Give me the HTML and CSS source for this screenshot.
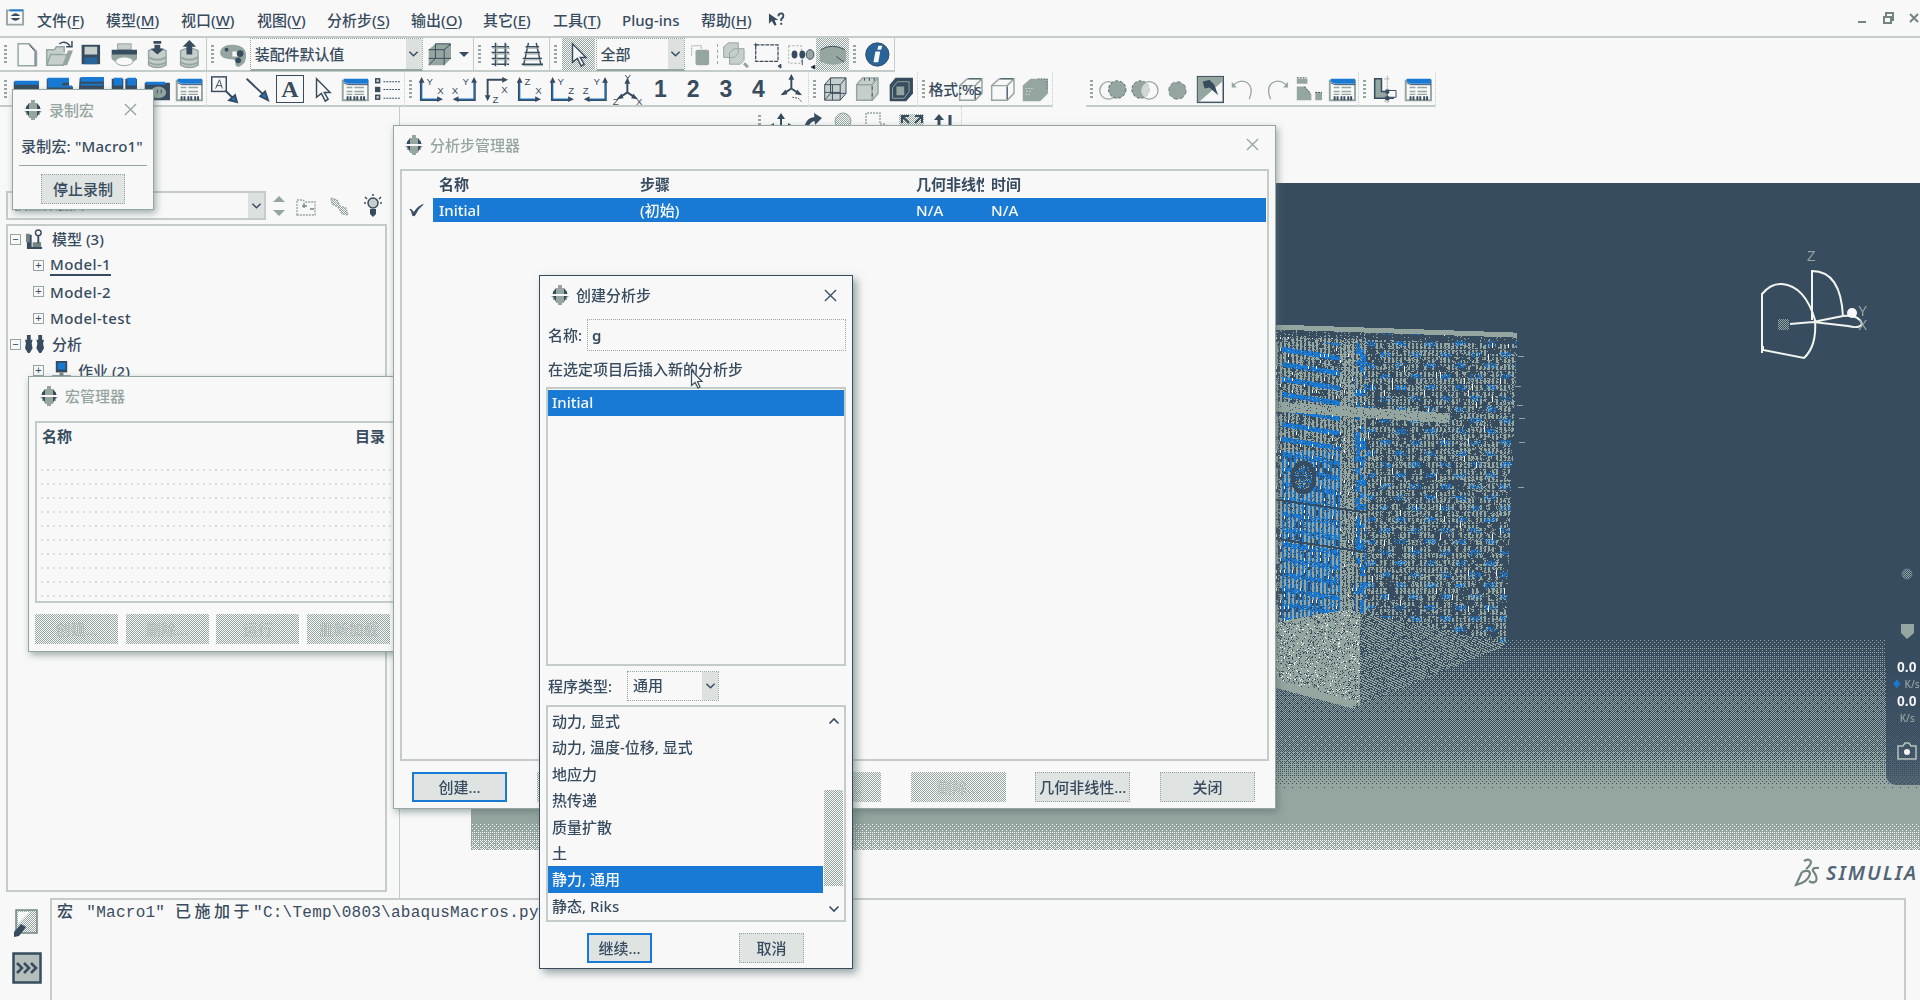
FILE: index.html
```
<!DOCTYPE html>
<html lang="zh-CN">
<head>
<meta charset="utf-8">
<title>Abaqus/CAE</title>
<link rel="stylesheet" href="styles.css">
</head>
<body>
<svg class="defs" width="0" height="0">
  <defs>
    <pattern id="dot" width="2" height="2" patternUnits="userSpaceOnUse"><rect width="1" height="1" fill="#95a5a0"/><rect x="1" y="1" width="1" height="1" fill="#95a5a0"/></pattern>
    <pattern id="mix" width="2" height="2" patternUnits="userSpaceOnUse"><rect width="2" height="2" fill="#384c60"/><rect width="1" height="1" fill="#187ad4"/><rect x="1" y="1" width="1" height="1" fill="#187ad4"/></pattern>
  </defs>
  <symbol id="logo" viewBox="0 0 18 20"><path d="M5 3h2V0h4v3h2v3h3v2l2 1H0l2-1V6h3zM0 11h18l-2 2v2h-3v3h-2v2H7v-2H5v-3H2v-2z" fill="#95a5a0"/><path d="M2 9V7l3-4v6zM16 9V7l-3-4v6zM2 11l3 6v-6zM16 11l-3 6v-6z" fill="#384c60"/></symbol>
  <symbol id="new" viewBox="0 0 32 34"><path d="M7.500 6v22.500h19V14L19 6z" fill="none" stroke="#95a5a0" stroke-width="1.500"/><path d="M19 7l6 7v14" fill="none" stroke="#384c60"/></symbol>
  <symbol id="open" viewBox="0 0 32 34"><path d="M3 28V12h8l2-3h8v6M3 28l4-11h19l-6 11z" fill="url(#dot)" stroke="#95a5a0" stroke-width="1.500"/><path d="M25 13h5l-6 15h-5z" fill="#95a5a0"/><path d="M16 6q6-4 11 2M29 3v6h-6" fill="none" stroke="#384c60" stroke-width="1.500"/></symbol>
  <symbol id="save" viewBox="0 0 32 34"><rect x="6" y="7" width="19" height="20" fill="#384c60"/><rect x="9" y="9" width="13" height="8" fill="#c7cfcc"/><rect x="9" y="20" width="13" height="7" fill="url(#mix)"/></symbol>
  <symbol id="print" viewBox="0 0 32 34"><path d="M9 6h14v6H9z" fill="url(#dot)" stroke="#95a5a0"/><path d="M3 12h26v8l-4 2H7l-4-2z" fill="#384c60"/><path d="M3 17h26v5l-3 2H6l-3-2z" fill="#95a5a0"/><ellipse cx="16" cy="24" rx="9" ry="4.500" fill="#f8f8f8" stroke="#95a5a0"/></symbol>
  <symbol id="dbin" viewBox="0 0 32 34"><path d="M7 13q9-5 18 0v15q-9 5-18 0z" fill="url(#dot)" stroke="#95a5a0" stroke-width="1.500"/><path d="M7 20q9 5 18 0M7 25q9 5 18 0" stroke="#95a5a0" stroke-width="2" fill="none"/><path d="M12 3h8v3h-8zM13 7h6v4h4l-7 6-7-6h4z" fill="#384c60"/></symbol>
  <symbol id="dbout" viewBox="0 0 32 34"><path d="M7 13q9-5 18 0v15q-9 5-18 0z" fill="url(#dot)" stroke="#95a5a0" stroke-width="1.500"/><path d="M7 20q9 5 18 0M7 25q9 5 18 0" stroke="#95a5a0" stroke-width="2" fill="none"/><path d="M13 17h6V9h4l-7-7-7 7h4z" fill="#384c60"/></symbol>
  <symbol id="palette" viewBox="0 0 32 34"><path d="M3 12q4-6 14-5 11 1 12 9 1 10-6 13-5 2-5-3 1-4-4-4-14-1-11-10z" fill="#95a5a0"/><path d="M15 14h6v5h-6z" fill="#f8f8f8"/><g fill="#384c60"><circle cx="9" cy="12" r="2"/><circle cx="23" cy="16" r="3.500"/><circle cx="21" cy="23" r="3"/></g></symbol>
  <symbol id="cube" viewBox="0 0 32 34"><path d="M5 12l7-6h16v15l-7 7H5z" fill="#95a5a0"/><path d="M5 12h16v16M21 12l7-6M12 6v15H5M12 21h16M12 6h15v2M5 28l7-7" fill="none" stroke="#384c60"/></symbol>
  <symbol id="wire" viewBox="0 0 32 34"><path d="M5 12l6-7h16v16l-6 7H5z" fill="url(#dot)"/><path d="M5 12h16v16H5zM11 5h16v16H11zM5 12l6-7M21 12l6-7M5 28l6-7M21 28l6-7M13 12v16M5 20h16" fill="none" stroke="#384c60"/></symbol>
  <symbol id="hidden" viewBox="0 0 32 34"><path d="M5 12l6-7h16v16l-6 7H5z" fill="url(#dot)"/><path d="M5 12h16v16H5zM5 12l6-7h16v16l-6 7M21 12l6-7" fill="none" stroke="#95a5a0" stroke-width="1.500"/><path d="M13 5v3m5-3v3m5-3v3M21 14v3m0 4v3" stroke="#384c60"/></symbol>
  <symbol id="shaded" viewBox="0 0 32 34"><path d="M5 12l6-7h18v16l-7 8H5z" fill="#384c60"/><path d="M8 15l5-6h12v10l-5 7H8z" fill="none" stroke="#95a5a0"/><path d="M12 14h8v9h-8z" fill="#95a5a0"/></symbol>
  <symbol id="cubeLine" viewBox="0 0 32 34"><path d="M5 13h16v15H5zM5 13l8-7h15v15l-7 7M21 13l7-7" fill="none" stroke="#95a5a0" stroke-width="1.500"/><path d="M14 6h13M21 14v13" stroke="#384c60"/></symbol>
  <symbol id="cubeFill" viewBox="0 0 32 34"><path d="M3 13l8-7h18v15l-8 8H3z" fill="#95a5a0"/><path d="M19 6h9v12" fill="none" stroke="#384c60" stroke-dasharray="1 2"/><path d="M6 16h7M7 19h4M6 22h6" stroke="#f8f8f8" stroke-dasharray="1 2"/></symbol>
  <symbol id="ladder" viewBox="0 0 32 34"><path d="M11 5v24M21 5v24M7 9h18M7 15h18M7 21h18M7 27h18" stroke="#384c60" stroke-width="1.500"/><path d="M12.500 6v22M22.500 6v22M8 10.500h18M8 16.500h18M8 22.500h18" stroke="#95a5a0"/></symbol>
  <symbol id="persp" viewBox="0 0 32 34"><path d="M12 5L7 28M20 5l5 23M9 9h14M8 15h16M6 21h20M5 27h22" stroke="#384c60" stroke-width="1.500"/><path d="M10 10.500h12M8 16.500h16M7 22.500h18M6 28.500h21" stroke="#95a5a0"/></symbol>
  <symbol id="cursor" viewBox="0 0 32 34"><path d="M10 6v19l5-4 4 8 3-2-4-7h6z" fill="#f8f8f8" stroke="#384c60" stroke-width="1.500"/></symbol>
  <symbol id="solid" viewBox="0 0 32 34"><path d="M6 18V8h10v4" fill="none" stroke="#95a5a0" stroke-dasharray="2 1"/><rect x="10" y="12" width="14" height="16" rx="2" fill="#95a5a0"/></symbol>
  <symbol id="cubes" viewBox="0 0 32 34"><path d="M5 9l5-4h10v11l-4 4H5zM11 15l5-4h10v12l-4 4H11z" fill="url(#dot)" stroke="#95a5a0"/><path d="M26 26l4 4" stroke="#95a5a0" stroke-width="3"/></symbol>
  <symbol id="rectsel" viewBox="0 0 32 34"><rect x="4" y="7" width="23" height="17" fill="none" stroke="#384c60" stroke-width="1.300" stroke-dasharray="4 1"/><path d="M4 5v4M2 7h4M27 29l3 2v-4z" stroke="#384c60" fill="#384c60"/></symbol>
  <symbol id="oval" viewBox="0 0 32 34"><path d="M4 8h13v18H4z" fill="none" stroke="#95a5a0" stroke-dasharray="2 2"/><g fill="#384c60"><ellipse cx="10" cy="17" rx="3" ry="4"/><ellipse cx="18" cy="17" rx="3" ry="4"/></g><ellipse cx="26" cy="17" rx="4" ry="5" fill="#95a5a0" stroke="#384c60"/><path d="M18 22v6M27 30l4 2v-4z" stroke="#384c60"/></symbol>
  <symbol id="lens" viewBox="0 0 32 34"><path d="M3 13q13-9 27 0v11q-13 7-27 0z" fill="#95a5a0"/><path d="M4 12q12-7 25 0M20 19l8 6" fill="none" stroke="#384c60"/></symbol>
  <symbol id="info" viewBox="0 0 32 34"><circle cx="16" cy="17" r="12" fill="url(#mix)" stroke="#384c60"/><path d="M17 8h4l-1 4h-4zM14 14h5l-2 11h-5z" fill="#f8f8f8"/></symbol>
  <symbol id="w1" viewBox="0 0 32 34"><path d="M3 9h26v10H3z" fill="#384c60"/><path d="M4 8h25v4H4z" fill="#187ad4"/></symbol>
  <symbol id="w2" viewBox="0 0 32 34"><path d="M3 6h23v8h4v5H3z" fill="#384c60"/><path d="M4 5h22v5h-6l-2 3h11v2H4z" fill="#187ad4"/></symbol>
  <symbol id="w3" viewBox="0 0 32 34"><path d="M4 5h25v14H3z" fill="#384c60"/><path d="M5 4h24v5H5zM5 11h23v2H5z" fill="#187ad4"/></symbol>
  <symbol id="w4" viewBox="0 0 32 34"><path d="M3 6h12v13H3zM17 6h12v13H17z" fill="#384c60"/><path d="M5 5h9v8H5zM19 5h9v8h-9z" fill="#187ad4"/></symbol>
  <symbol id="cam" viewBox="0 0 32 34"><path d="M3 10h26v18H3z" fill="#384c60"/><path d="M4 9h20v3H4z" fill="#187ad4"/><ellipse cx="17" cy="20" rx="8" ry="6" fill="#95a5a0"/><path d="M16 17v4M20 17v4" stroke="#384c60"/></symbol>
  <symbol id="form" viewBox="0 0 32 34"><path d="M3 8h26v20H3z" fill="#f8f8f8" stroke="#95a5a0" stroke-width="2"/><path d="M4 6h25v5H8l-4-2z" fill="#187ad4"/><path d="M4 10l4 2h21" stroke="#384c60" fill="none"/><path d="M7 15h6M15 15h10M7 19h6M15 19h10M7 22h6M15 22h10" stroke="#95a5a0" stroke-width="1.500"/><path d="M7 26h5M14 26h5M21 26h5" stroke="#384c60" stroke-width="4" stroke-dasharray="2 1"/></symbol>
  <symbol id="boxA" viewBox="0 0 32 34"><rect x="3" y="4" width="15" height="15" fill="none" stroke="#384c60" stroke-width="1.500"/><path d="M7 16l4-9 3 9M8 13h5" fill="none" stroke="#384c60"/><path d="M17 18l7 7M29 30l-8-2 6-5z" stroke="#384c60" stroke-width="2" fill="#187ad4"/></symbol>
  <symbol id="arr" viewBox="0 0 32 34"><path d="M5 6l17 16M27 28l-8-4 5-5z" stroke="#384c60" stroke-width="2" fill="#187ad4"/></symbol>
  <symbol id="list" viewBox="0 0 32 34"><g fill="#c7cfcc" stroke="#384c60" stroke-width="1.500"><rect x="3" y="6" width="4" height="4"/><rect x="3" y="15" width="4" height="4" fill="#384c60"/><rect x="3" y="23" width="4" height="4"/></g><path d="M11 9h17M11 17h17M11 26h17" stroke="#384c60" stroke-dasharray="2 1"/></symbol>
  <symbol id="axL" viewBox="0 0 32 34"><path d="M6 8v19h18" fill="none" stroke="#187ad4" stroke-width="1.500"/><path d="M5 8v20h18" fill="none" stroke="#384c60" stroke-width="1.500"/><path d="M3 10l3-6 3 6zM22 24l6 3-6 3z" fill="#384c60"/></symbol>
  <symbol id="axR" viewBox="0 0 32 34"><path d="M26 8v19H8" fill="none" stroke="#187ad4" stroke-width="1.500"/><path d="M27 8v20H9" fill="none" stroke="#384c60" stroke-width="1.500"/><path d="M23 10l3-6 3 6zM10 24l-6 3 6 3z" fill="#384c60"/></symbol>
  <symbol id="axD" viewBox="0 0 32 34"><path d="M6 24V7h16" fill="none" stroke="#384c60" stroke-width="2"/><path d="M3 23l3 6 3-6zM21 4l6 3-6 3z" fill="#384c60"/></symbol>
  <symbol id="axis3" viewBox="0 0 32 34"><path d="M16 8v12l-9 6M16 20l9 6" fill="none" stroke="#384c60" stroke-width="2"/><path d="M13 11l3-6 3 6zM10 21l-5 6 7-1zM22 21l5 6-7-1z" fill="#384c60"/></symbol>
  <symbol id="c1" viewBox="0 0 32 34"><circle cx="12" cy="18" r="9" fill="none" stroke="#95a5a0" stroke-width="1.300"/><circle cx="21" cy="17" r="9" fill="#95a5a0" stroke="#384c60" stroke-width=".8" stroke-dasharray="3 2"/></symbol>
  <symbol id="c2" viewBox="0 0 32 34"><circle cx="12" cy="17" r="9" fill="#95a5a0" stroke="#384c60" stroke-width=".8" stroke-dasharray="3 2"/><circle cx="21" cy="18" r="9" fill="#f8f8f8" fill-opacity=".6" stroke="#95a5a0" stroke-width="1.300"/></symbol>
  <symbol id="c3" viewBox="0 0 32 34"><circle cx="16" cy="18" r="9" fill="#95a5a0" stroke="#384c60" stroke-width=".6" stroke-dasharray="4 3"/></symbol>
  <symbol id="pick" viewBox="0 0 32 34"><rect x="2.500" y="3.500" width="27" height="27" fill="#95a5a0" stroke="#384c60"/><path d="M5 29L28 9v20z" fill="#f8f8f8"/><path d="M8 9l7-2 5 5 4 11-9-8-5 1z" fill="#384c60"/></symbol>
  <symbol id="undo" viewBox="0 0 32 34"><path d="M6 12q7-6 14-2 7 5 2 17" fill="none" stroke="#95a5a0" stroke-width="1.300"/><path d="M4 9v6h5z" fill="#95a5a0"/></symbol>
  <symbol id="redo" viewBox="0 0 32 34"><path d="M26 12q-7-6-14-2-7 5-2 17" fill="none" stroke="#95a5a0" stroke-width="1.300"/><path d="M28 9v6h-5z" fill="#95a5a0"/></symbol>
  <symbol id="blocks" viewBox="0 0 32 34"><path d="M3 6h11v5H3zM3 14h8l7 8v6H3zM22 20h7v8h-7z" fill="#95a5a0"/><path d="M3 5h10M11 14l6 7M22 20h7" stroke="#384c60" stroke-dasharray="2 1"/></symbol>
  <symbol id="ell" viewBox="0 0 32 34"><path d="M5 6h7v13h12v7H5z" fill="#95a5a0" stroke="#384c60" stroke-width="1.600"/><path d="M18 3v28M15 6h6M15 29h6" stroke="#95a5a0" stroke-dasharray="2 1"/><path d="M18 18h9v7h-9z" fill="#f8f8f8" stroke="#384c60"/><path d="M16 17h4v4h-4zM16 24h4v4h-4z" fill="#384c60"/></symbol>
  <symbol id="x" viewBox="0 0 14 14"><path d="M1 1l12 12M13 1L1 13" stroke="currentColor" stroke-width="1.400"/></symbol>
  <symbol id="chev" viewBox="0 0 12 8"><path d="M1.500 1.500L6 6l4.500-4.500" fill="none" stroke="currentColor" stroke-width="1.600"/></symbol>
</svg>

<div class="app">
  <div class="menubar">
    <svg class="appicon" viewBox="0 0 20 18"><path d="M1 2h17v15H1z" fill="none" stroke="#95a5a0" stroke-width="2"/><path d="M4 1h14v2H4z" fill="#187ad4"/><path d="M5 8q5-6 10 0zM5 10h10q-5 6-10 0z" fill="#384c60"/></svg>
    <nav class="menus"><span>文件(<u>F</u>)</span><span>模型(<u>M</u>)</span><span>视口(<u>W</u>)</span><span>视图(<u>V</u>)</span><span>分析步(<u>S</u>)</span><span>输出(<u>O</u>)</span><span>其它(<u>E</u>)</span><span>工具(<u>T</u>)</span><span>Plu<u>g</u>-ins</span><span>帮助(<u>H</u>)</span>
      <svg class="whatsthis" viewBox="0 0 18 16"><path d="M1 1v11l3-3 3 5 2-1-2-5h4z" fill="#384c60"/><path d="M11 4q0-3 3-3t2 4l-2 2v2M14 11v2" fill="none" stroke="#384c60" stroke-width="2"/></svg></nav>
    <div class="winctl"><svg viewBox="0 0 64 12"><path d="M1 10h8" stroke="#738583" stroke-width="2"/><path d="M27 5h7v6h-7zM29 4V1h7v7h-2" fill="none" stroke="#738583" stroke-width="2"/><path d="M53 2l8 8M61 2l-8 8" stroke="#738583" stroke-width="2"/></svg></div>
  </div>

  <div class="bar bar1">
    <div class="grp"><i class="grip"></i><svg class="ic"><use href="#new"/></svg><svg class="ic"><use href="#open"/></svg><svg class="ic"><use href="#save"/></svg><svg class="ic"><use href="#print"/></svg><svg class="ic"><use href="#dbin"/></svg><svg class="ic"><use href="#dbout"/></svg></div>
    <div class="grp"><i class="grip"></i><svg class="ic"><use href="#palette"/></svg>
      <div class="combo wide"><span>装配件默认值</span><b><svg><use href="#chev"/></svg></b></div>
      <svg class="ic"><use href="#cube"/></svg><i class="tri"></i></div>
    <div class="grp"><i class="grip"></i><svg class="ic"><use href="#ladder"/></svg><svg class="ic"><use href="#persp"/></svg></div>
    <div class="grp last"><i class="grip"></i><svg class="ic on"><use href="#cursor"/></svg>
      <div class="combo all"><span>全部</span><b><svg><use href="#chev"/></svg></b></div>
      <svg class="ic"><use href="#solid"/></svg><i class="split"></i><svg class="ic"><use href="#cubes"/></svg><svg class="ic"><use href="#rectsel"/></svg><svg class="ic"><use href="#oval"/></svg><svg class="ic on"><use href="#lens"/></svg></div>
    <div class="grp"><i class="grip"></i><svg class="ic"><use href="#info"/></svg></div>
  </div>

  <div class="bar bar2">
    <div class="grp"><i class="grip"></i><svg class="ic"><use href="#w1"/></svg><svg class="ic"><use href="#w2"/></svg><svg class="ic"><use href="#w3"/></svg><svg class="ic"><use href="#w4"/></svg><svg class="ic"><use href="#cam"/></svg><svg class="ic"><use href="#form"/></svg></div>
    <div class="grp notes"><svg class="ic"><use href="#boxA"/></svg><svg class="ic"><use href="#arr"/></svg><span class="ic letter">A</span><svg class="ic"><use href="#cursor"/></svg><svg class="ic"><use href="#form"/></svg><svg class="ic"><use href="#list"/></svg></div>
    <div class="grp"><i class="grip"></i>
      <svg class="ic" viewBox="0 0 32 34"><use href="#axL"/><text x="11" y="12">Y</text><text x="22" y="22">X</text></svg>
      <svg class="ic" viewBox="0 0 32 34"><use href="#axR"/><text x="14" y="12">Y</text><text x="3" y="22">X</text></svg>
      <svg class="ic" viewBox="0 0 32 34"><use href="#axD"/><text x="20" y="21">X</text><text x="11" y="31">Z</text></svg>
      <svg class="ic" viewBox="0 0 32 34"><use href="#axL"/><text x="11" y="12">Z</text><text x="22" y="22">X</text></svg>
      <svg class="ic" viewBox="0 0 32 34"><use href="#axL"/><text x="11" y="12">Y</text><text x="22" y="22">Z</text></svg>
      <svg class="ic" viewBox="0 0 32 34"><use href="#axR"/><text x="14" y="12">Y</text><text x="3" y="22">Z</text></svg>
      <svg class="ic" viewBox="0 0 32 34"><use href="#axis3"/><text x="13" y="8">Y</text><text x="1" y="33">Z</text><text x="25" y="33">X</text></svg>
      <span class="ic num">1</span><span class="ic num">2</span><span class="ic num">3</span><span class="ic num">4</span>
      <svg class="ic" viewBox="0 0 32 34"><use href="#axis3" y="-4"/><path d="M17 25l6 1 4 4" fill="none" stroke="#384c60" stroke-dasharray="2 1"/></svg></div>
    <div class="grp"><i class="grip"></i><svg class="ic"><use href="#wire"/></svg><svg class="ic"><use href="#hidden"/></svg><svg class="ic"><use href="#shaded"/></svg></div>
    <div class="grp fmt"><i class="grip"></i><svg class="ic"><use href="#cubeLine"/></svg><svg class="ic"><use href="#cubeLine"/></svg><svg class="ic"><use href="#cubeFill"/></svg><span class="fmttext">格式:%s</span></div>
    <div class="grp disp"><i class="grip"></i><svg class="ic"><use href="#c1"/></svg><svg class="ic"><use href="#c2"/></svg><svg class="ic"><use href="#c3"/></svg><svg class="ic"><use href="#pick"/></svg><svg class="ic"><use href="#undo"/></svg><svg class="ic"><use href="#redo"/></svg><svg class="ic"><use href="#blocks"/></svg><svg class="ic"><use href="#form"/></svg></div>
    <div class="grp"><i class="grip"></i><svg class="ic"><use href="#ell"/></svg><svg class="ic"><use href="#form"/></svg></div>
  </div>

  <div class="main">
    <aside class="side">
      <div class="treebar">
        <div class="combo db"><span>模型数据库</span><b><svg><use href="#chev"/></svg></b></div>
        <svg class="treeicons" viewBox="0 0 116 30"><g fill="#95a5a0"><path d="M4 11l6-6 6 6zM4 19l6 6 6-6z"/></g><g fill="none" stroke="#95a5a0" stroke-width="1.300"><path d="M28 24V9h6l2 2h10v13z" stroke-dasharray="2 1"/><path d="M35 12v5m-2-2h5m3 3h4" stroke="#738583"/><path d="M62 7l6 2 3 6 6 2 2 7-6-1-4-7-6-3z" fill="url(#dot)" stroke-dasharray="2 1"/></g><circle cx="104" cy="12" r="5" fill="#c7cfcc" stroke="#384c60" stroke-width="1.500"/><path d="M101 18h6v5l-3 3-3-3z" fill="#384c60"/><path d="M96 6l2 2M112 6l-2 2M95 12h2M111 12h2M104 3v2" stroke="#384c60" stroke-width="1.500"/></svg>
      </div>
      <ul class="tree">
        <li><i class="pm">−</i><svg viewBox="0 0 20 22"><path d="M2 6h5v13h11v2H2z" fill="#384c60"/><path d="M1 5h4v9H1zM8 14h9v5H8z" fill="#738583"/><circle cx="14" cy="4" r="3" fill="none" stroke="#384c60" stroke-width="1.500"/><path d="M14 7v8" stroke="#384c60" stroke-width="2"/></svg>模型 (3)</li>
        <li class="sub"><i class="pm">+</i><span class="current">Model-1</span></li>
        <li class="sub"><i class="pm">+</i><span>Model-2</span></li>
        <li class="sub"><i class="pm">+</i><span>Model-test</span></li>
        <li><i class="pm">−</i><svg viewBox="0 0 20 22"><path d="M2 1h4v5h2l-1 4 1 5-3 5H3l-3-5 1-5-1-4h2zM14 1h4v5h2l-1 4 1 5-3 5h-2l-3-5 1-5-1-4h2z" fill="#384c60"/></svg>分析</li>
        <li class="sub"><i class="pm">+</i><svg viewBox="0 0 20 22"><path d="M4 1h12v12H4z" fill="#384c60"/><path d="M6 3h8v7H6z" fill="#187ad4"/><path d="M8 13h4v3h8v4H0v-4h8z" fill="#738583"/></svg>作业 (2)</li>
      </ul>
    </aside>
    <section class="work">
      <div class="bar3"><div class="grp views"><i class="grip"></i>
        <svg class="strip" viewBox="0 0 196 20"><path d="M17 14V4M6 15h22" stroke="#384c60" stroke-width="2"/><path d="M13 7l4-6 4 6zM10 11v7l-5-4zM24 11v7l5-4z" fill="#384c60"/><path d="M42 18q1-11 10-11" fill="none" stroke="#384c60" stroke-width="4"/><path d="M50 1l8 5-7 7z" fill="#384c60"/><circle cx="79" cy="9" r="8" fill="url(#dot)" stroke="#95a5a0"/><path d="M102 18V1h14v11h5v6" fill="none" stroke="#95a5a0" stroke-dasharray="2 1" stroke-width="1.500"/><path d="M135 2h25v16h-25z" fill="url(#dot)"/><path d="M138 11V4h7M138 4l7 7M158 11V4h-7M158 4l-7 7" fill="none" stroke="#384c60" stroke-width="2"/><path d="M175 5v13M186 3v15" stroke="#384c60" stroke-width="3"/><path d="M170 8l5-6 5 6z" fill="#384c60"/></svg></div></div>
      <div class="viewport"><canvas id="scene" width="1449" height="667"></canvas>
        <svg class="triad" viewBox="0 0 140 140"><g fill="none" stroke="#f2f4ee" stroke-width="2"><path d="M62 74V25q29 0 31 46"/><path d="M12 107V48q9-11 20-10 23 2 33 36 2 26-11 38l-41-8V100"/><path d="M63 76l30-6q16-2 19 8-3 5-14 2l-35-4M40 78l23-2"/></g><circle cx="102" cy="67" r="5" fill="#f8f8f8"/><rect x="28" y="73" width="11" height="11" fill="url(#dot)"/><text x="57" y="15">Z</text><text x="108" y="70">Y</text><text x="108" y="84">X</text></svg>
        <div class="netwidget"><svg viewBox="0 0 20 84"><circle cx="10" cy="16" r="5" fill="url(#dot)" stroke="#587d94"/><path d="M4 66h13v9l-7 6-6-6z" fill="#95a5a0"/></svg><b>0.0</b><small><i>♦</i> K/s</small><b>0.0</b><small>&nbsp;&nbsp; K/s</small><svg class="cam" viewBox="0 0 20 18"><path d="M1 4h5l2-3h4l2 3h5v13H1z" fill="none" stroke="#b8c3bf" stroke-width="1.500"/><circle cx="10" cy="10" r="3" fill="#f8f8f8"/></svg></div>
      </div>
      <div class="brand"><svg viewBox="0 0 28 30"><path d="M11 3q6-3 7 1 0 3-5 7M9 14q8-3 8 2-2 8-14 11l6-13M26 10q-7-1-6 3 5 6 3 10-3 3-7 0" fill="none" stroke="#738583" stroke-width="2.200"/></svg><span>SIMULIA</span></div>
    </section>
  </div>

  <div class="console">
    <div class="tabs"><svg viewBox="0 0 30 32"><path d="M4 3h21v23H4z" fill="url(#dot)" stroke="#738583" stroke-width="1.500"/><path d="M6 5h12L6 17z" fill="#f8f8f8"/><path d="M2 25l7-8 5 3-7 9-5 1z" fill="#384c60"/></svg><svg viewBox="0 0 30 32"><path d="M1.500 1.500h27v29h-27z" fill="#b4bfbb" stroke="#384c60" stroke-width="2.500"/><path d="M5 11l5 5-5 5M12 11l5 5-5 5M19 11l5 5-5 5" fill="none" stroke="#384c60" stroke-width="2.600"/></svg></div>
    <pre class="log"><span>宏</span> "Macro1" <span>已施加于</span>"C:\Temp\0803\abaqusMacros.py".</pre>
  </div>
</div>

<div class="win macros">
  <header><svg class="lg"><use href="#logo"/></svg>宏管理器</header>
  <div class="box"><b>名称</b><b>目录</b></div>
  <footer><button disabled>创建...</button><button disabled>删除...</button><button disabled>运行</button><button disabled>重新加载</button></footer>
</div>

<div class="win record">
  <header><svg class="lg"><use href="#logo"/></svg>录制宏<svg class="cl"><use href="#x"/></svg></header>
  <p>录制宏: "Macro1"</p>
  <footer><button>停止录制</button></footer>
</div>

<div class="win steps">
  <header><svg class="lg"><use href="#logo"/></svg>分析步管理器<svg class="cl"><use href="#x"/></svg></header>
  <div class="box">
    <div class="row head"><i></i><span>名称</span><span>步骤</span><span>几何非线性</span><span>时间</span></div>
    <div class="row pick"><i><svg viewBox="0 0 16 14"><path d="M1 6q3 1 4 4Q9 3 15 1 9 6 6 13H4Q3 8 1 6z" fill="#384c60" stroke="#384c60"/></svg></i><span>Initial</span><span>(初始)</span><span>N/A</span><span>N/A</span></div>
  </div>
  <footer><button class="def">创建...</button><button disabled>编辑...</button><button disabled>替换...</button><button disabled>重命名...</button><button disabled>删除...</button><button>几何非线性...</button><button>关闭</button></footer>
</div>

<div class="win create">
  <header><svg class="lg"><use href="#logo"/></svg>创建分析步<svg class="cl"><use href="#x"/></svg></header>
  <div class="field"><label>名称:</label><div class="input">g</div></div>
  <p>在选定项目后插入新的分析步</p>
  <div class="box after"><div class="sel">Initial</div></div>
  <div class="type"><label>程序类型:</label><div class="combo"><span>通用</span><b><svg><use href="#chev"/></svg></b></div></div>
  <div class="box kinds">
    <ul><li>动力, 显式</li><li>动力, 温度-位移, 显式</li><li>地应力</li><li>热传递</li><li>质量扩散</li><li>土</li><li class="sel">静力, 通用</li><li>静态, Riks</li></ul>
    <div class="scroll"><svg class="up"><use href="#chev"/></svg><i></i><svg><use href="#chev"/></svg></div>
  </div>
  <footer><button class="def">继续...</button><button>取消</button></footer>
</div>

<svg class="pointer" viewBox="0 0 14 20"><path d="M1.500 1.500v15l3.500-3 3 5.500 2-1-2.500-5.500H12z" fill="#f8f8f8" stroke="#384c60" stroke-width="1.200"/></svg>
<script src="scene.js"></script>
</body>
</html>
```
FILE: styles.css
```
:root { --ink: #384c60; --grey: #95a5a0; --paper: #f8f8f8; --blue: #187ad4; --line: #c3ccc8;
  --checker: repeating-conic-gradient(#95a5a0 0 25%, #f8f8f8 0 50%) 0 0/2px 2px;
  --sparse: repeating-conic-gradient(#95a5a0 0 25%, transparent 0 50%) 0 0/2px 2px; }
* { box-sizing: border-box; }
body { margin: 0; width: 1920px; height: 1000px; overflow: hidden; position: relative; background: var(--paper); color: var(--ink);
  font: 500 15px/22px "Noto Sans", "Noto Sans CJK SC", sans-serif; }
ul, p, pre { margin: 0; padding: 0; list-style: none; }
i { font-style: normal; }
u { text-underline-offset: 2px; }
.defs { position: absolute; }
.app { height: 1000px; display: flex; flex-direction: column; }
.menubar { height: 36px; flex: none; display: flex; align-items: center; padding: 3px 0 0 6px; }
.appicon { width: 19px; height: 18px; margin-top: -5px; }
.menus { display: grid; grid-template-columns: 69px 75px 76px 70px 84px 72px 70px 69px 79px 67px 20px; margin-left: 12px; flex: 1; align-items: center; white-space: nowrap; }
.whatsthis { width: 17px; height: 16px; }
.winctl { width: 65px; margin-right: -2px; margin-top: -3px; }
.winctl svg { width: 64px; height: 12px; display: block; }
.bar { display: flex; flex: none; }
.bar1 { height: 36px; border-top: 2px solid var(--line); }
.bar2 { height: 36px; margin-top: -1px; }
.grp { display: flex; align-items: center; border-right: 1px solid var(--line); border-bottom: 2px solid var(--line); }
.bar2 .grp { border-right-style: dotted; border-top: 2px solid transparent; }
.grip { width: 3px; height: 18px; margin: 0 3px 0 4px; flex: none; background: repeating-linear-gradient(#95a5a0 0 2px, transparent 2px 4px); }
.ic { width: 32.700px; height: 33px; flex: none; display: block; }
.ic text { font: 10px "Liberation Sans", sans-serif; fill: var(--ink); }
.on { background: var(--checker); }
.num { font: bold 23px/33px "Liberation Sans", sans-serif; text-align: center; }
.notes { padding-left: 1px; }
.letter { width: 28px; height: 28px; border: 1.500px solid var(--ink); margin: 0 2.350px; font: bold 24px/26px "Liberation Serif", serif; text-align: center; }
.split { height: 20px; border-left: 1px dashed var(--grey); }
.combo { display: flex; justify-content: space-between; height: 30px; line-height: 26px; border: 1px dotted var(--grey); padding-left: 5px; }
.combo b { width: 16px; background: #dce1df; display: grid; place-items: center; }
.combo svg { width: 11px; height: 8px; }
.wide { width: 173px; height: 33px; line-height: 31px; }
.wide span { letter-spacing: -.1px; }
.all { width: 89px; height: 33px; line-height: 31px; margin-left: 1px; }
.bar1 .combo { border-bottom: 2px solid var(--grey); padding-left: 4px; }
.tri { border: 5px solid transparent; border-top-color: var(--ink); border-bottom: 0; margin: 0 4px 0 3px; }
.last { border-right: 0; }
.last .grip { margin-right: 5px; }
.last + .grp .grip { margin-right: 5px; }
.fmt { position: relative; padding-left: 38px; }
.fmt .grip { margin-left: -34px; margin-right: 29px; }
.fmttext { position: absolute; left: 11px; top: 5px; white-space: nowrap; letter-spacing: -.2px; }
.disp { margin-left: 33px; }
.disp .ic { width: 32.850px; }
.main { height: 791px; flex: none; display: flex; }
.side { width: 400px; padding: 84px 0 6px 6px; border-right: 1px solid var(--line); display: flex; flex-direction: column; }
.treebar { display: flex; height: 33px; align-items: start; }
.db { width: 260px; height: 29px; border: 2px solid var(--line); }
.db span { margin-top: -3px; }
.treeicons { width: 116px; height: 30px; margin-left: 3px; }
.tree { width: 381px; flex: 1; border: 2px solid var(--line); padding: 0 0 0 2px; }
.tree li { height: 26.300px; display: flex; align-items: center; gap: 4px; }
.tree .sub { padding-left: 23px; gap: 6px; }
.tree svg { width: 19px; height: 21px; margin-right: 4px; }
.tree .sub svg { margin: 0 1px 0 2px; }
.pm { width: 11px; height: 11px; border: 1px solid var(--grey); font: 11px/9px "Liberation Sans", sans-serif; text-align: center; }
.current { border-bottom: 2px solid var(--ink); line-height: 20px; }
.tree span { letter-spacing: .4px; }
.work { flex: 1; padding-left: 71px; display: flex; flex-direction: column; }
.bar3 { height: 76px; padding-left: 283px; }
.views { width: 208px; height: 30px; border-bottom: 0; border-right-style: dotted; align-items: start; }
.views .grip { margin-top: 8px; }
.strip { width: 196px; height: 20px; margin-top: 5px; flex: none; }
.viewport { height: 667px; position: relative; overflow: hidden; }
.viewport canvas { display: block; }
.triad { position: absolute; left: 1279px; top: 63px; width: 140px; height: 140px; }
.triad text { font: 14px "Liberation Sans", sans-serif; fill: var(--grey); }
.netwidget { position: absolute; right: 0; top: 372px; width: 34px; height: 230px; padding-left: 10px; border-radius: 10px 0 0 10px; background: linear-gradient(rgba(56,76,96,1) 0 115px, rgba(56,76,96,.72)); color: var(--paper); display: flex; flex-direction: column; overflow: hidden; }
.netwidget svg { width: 20px; flex: none; }
.netwidget svg:first-child { height: 84px; margin: 3px 0 17px 1px; }
.netwidget b { font: bold 14px/17px "Liberation Sans", sans-serif; margin-left: 1px; }
.netwidget small { font-size: 10px; line-height: 17px; color: var(--grey); white-space: nowrap; margin-left: -4px; }
.netwidget small i { color: var(--blue); }
.netwidget .cam { height: 18px; margin: 15px 0 0 1px; }
.brand { height: 48px; display: flex; align-items: center; padding: 0 0 3px 1322px; gap: 5px; overflow: hidden; width: 1449px; }
.brand svg { width: 28px; height: 30px; flex: none; }
.brand span { font: italic 600 20px "Noto Sans", sans-serif; letter-spacing: 2px; color: #526676; }
.console { flex: 1; display: flex; }
.tabs { width: 50px; padding: 9px 0 0 12px; display: flex; flex-direction: column; gap: 13px; }
.tabs svg { width: 30px; height: 32px; }
.log { width: 1856px; border: 2px solid var(--line); border-bottom: 0; padding: 2px 5px; font: 500 16px/22px "Liberation Mono", "Noto Sans CJK SC", monospace; letter-spacing: .25px; }
.log span { letter-spacing: 3.500px; }

.win { position: absolute; background: var(--paper); border: 1px solid var(--grey); box-shadow: 2px 3px 7px rgba(90,110,110,.55); display: flex; flex-direction: column; }
.win header { display: flex; align-items: center; gap: 7px; color: var(--grey); height: 38px; flex: none; }
.lg { width: 18px; height: 20px; }
.cl { width: 13px; height: 13px; margin-left: auto; }
.box { border: 2px solid var(--line); }
.win footer { display: flex; justify-content: space-between; }
button { height: 30px; border: 1px dotted var(--grey); background: #dfe3e1; color: var(--ink); font: inherit; line-height: 26px; padding: 0; white-space: nowrap; overflow: hidden; }
button:disabled { background: var(--checker); color: #b3bebb; border: 0; }
.def { border: 2px solid var(--blue); }
.macros { left: 28px; top: 376px; width: 368px; height: 276px; padding: 0 0 0 6px; border-right: 0; }
.macros header { padding-left: 5px; }
.macros .box { margin-top: 6px; height: 182px; border-right: 0; display: flex; justify-content: space-between; padding: 2px 11px 0 5px;
  background: linear-gradient(var(--paper), var(--paper)) 0 0/100% 38px no-repeat, radial-gradient(circle, #95a5a0 .5px, transparent .8px) 8px 40px/6px 14px; }
.macros footer { margin-top: 11px; padding-right: 6px; }
.macros button { width: 83px; }
.record { left: 12px; top: 89px; width: 142px; height: 121px; padding: 0 6px; }
.record header { padding: 1px 10px 0 5px; }
.record p { margin-top: 7px; padding: 0 0 8px 2px; border-bottom: 1px solid var(--grey); white-space: nowrap; letter-spacing: .2px; }
.record footer { justify-content: center; margin-top: 8px; }
.record button { width: 84px; }
.steps { left: 393px; top: 125px; width: 883px; height: 684px; padding: 0 20px 0 6px; }
.steps header { padding-left: 5px; height: 37px; margin-right: -4px; }
.steps .box { height: 592px; margin: 6px -14px 0 0; padding-top: 1px; }
.row { display: grid; grid-template-columns: 31px 201px 276px 75px 1fr; height: 24px; line-height: 24px; padding-right: 1px; }
.head { font-weight: 700; }
.row span { padding-left: 6px; overflow: hidden; white-space: nowrap; }
.head span:nth-child(4) { margin-right: 1px; }
.row i svg { width: 15px; height: 14px; margin: 5px 0 0 7px; display: block; }
.pick span { background: var(--blue); color: var(--paper); }
.steps .pick { margin-top: 2px; }
.steps footer { margin: 11px 0 0 12px; }
.steps footer button { width: 95px; }
.create { left: 539px; top: 275px; width: 314px; height: 694px; padding: 0 6px; border-color: var(--ink); box-shadow: 4px 4px 8px rgba(90,110,110,.6); }
.create header { color: var(--ink); padding: 0 9px 0 5px; }
.field { display: flex; margin: 5px 0 0 2px; gap: 5px; line-height: 32px; }
.input { flex: 1; border: 1px dotted var(--grey); height: 32px; line-height: 30px; padding-left: 4px; font-weight: 600; }
.create p { padding: 7px 0 7px 2px; }
.sel { background: var(--blue); color: var(--paper); }
.after { height: 279px; }
.after .sel { height: 26px; line-height: 25px; padding-left: 4px; margin-top: 1px; }
.type { display: flex; gap: 15px; padding-left: 2px; line-height: 30px; margin-top: 5px; }
.type .combo { width: 92px; }
.kinds { height: 217px; margin-top: 4px; display: flex; padding-top: 1px; }
.kinds ul { width: 275px; }
.kinds li { height: 26.400px; line-height: 26px; padding-left: 4px; }
.scroll { flex: 1; display: flex; flex-direction: column; align-items: center; padding: 9px 0; }
.scroll svg { width: 12px; height: 8px; flex: none; }
.scroll svg:last-child { margin-top: 19px; }
.scroll i { width: 19px; height: 96px; flex: none; background: var(--checker); margin: 65px 0 0; }
.up { transform: scaleY(-1); }
.create footer { margin: 11px 42px 0 41px; }
.create footer button { width: 65px; }
.pointer { position: absolute; left: 690px; top: 369px; width: 14px; height: 20px; }
```
FILE: scene.js
```
// Ordered-dither background and the meshed block with its load markers.
const ctx = document.getElementById('scene').getContext('2d');
const W = 1449, H = 667, OX = 471, OY = 183;
const bayer = [0,32,8,40,2,34,10,42,48,16,56,24,50,18,58,26,12,44,4,36,14,46,6,38,60,28,52,20,62,30,54,22,
  3,35,11,43,1,33,9,41,51,19,59,27,49,17,57,25,15,47,7,39,13,45,5,37,63,31,55,23,61,29,53,21];
const ink = [56,76,96], grey = [149,165,160], paper = [248,248,248], blue = [24,122,212];
const img = ctx.createImageData(W, H);
const stops = [[0,0],[638,0],[640,.12],[665,.28],[700,.46],[750,.54],[785,.92],[790,1],[820,1],[824,1.08],[850,1.42]];
let seed = 7;
const rnd = () => (seed = (seed * 16807) % 2147483647) / 2147483647;
const lerp = (x, a, b, c, d) => c + (x - a) / (b - a) * (d - c);
// stable per-cell noise, so marks keep the same value over several pixels
const cell = (a, b) => { const v = Math.sin(a * 127.1 + b * 311.7) * 43758.5453; return v - Math.floor(v); };
function tone(y) {
  for (let i = 1; i < stops.length; i++) if (y <= stops[i][0]) return lerp(y, stops[i-1][0], stops[i][0], stops[i-1][1], stops[i][1]);
  return 1.42;
}
for (let j = 0; j < H; j++) {
  const y = j + OY, t = tone(y);
  for (let i = 0; i < W; i++) {
    const x = i + OX, th = (bayer[(y & 7) * 8 + (x & 7)] + .5) / 64;
    let c = t > 1 ? (th < t - 1 ? paper : grey) : (th < t ? grey : ink);
    if (x > 1270 && x < 1520) {
      const top = lerp(x, 1274, 1513, 324, 332), right = lerp(y, 332, 643, 1517, 1505);
      const bottom = x < 1352 ? lerp(x, 1274, 1352, 687, 708) : lerp(x, 1352, 1505, 708, 645);
      const floor = x < 1345 ? lerp(x, 1274, 1345, 622, 609) : lerp(x, 1345, 1505, 609, 643);
      const bar = lerp(x, 1274, 1450, 401, 413);
      if (x < right && y > top && y < bottom) {
        const r = rnd(), k = Math.floor(x / 4), on = x % 4 < 2, n = cell(k, Math.floor(y / 6));
        const band = ((y + Math.floor((x - 1274) * -.16)) % 15 + 15) % 15;
        if (y < top + 5) c = grey;
        else if (y > floor) {
          c = x < 1360 ? (r < .8 ? grey : r < .85 ? paper : ink) : (((x + y * 3) % 5 < 3 && r < .75) ? grey : ink);
          if (y > bottom - 8 && x < 1352) c = grey;
        }
        else if (x < 1450 && y > bar && y < bar + 10) c = r < .94 ? grey : ink;
        else if (x < 1366) {
          c = on ? (n < .8 && r < .92 ? grey : ink) : r < .22 ? grey : ink;
          if (x > 1340 && x < 1354 && r < .45) c = grey;
          const dense = y > 450 ? .72 : .85;
          if (y > 342 && x > 1281 && x < 1340 && (band < 5 || (y > 450 && !on)) && r < dense) c = blue;
          if (x > 1354 && y > 342 && n > .55 && r < .8) c = blue;
          if (on && y % 6 < 3 && n > .86 && x % 4 === 0) c = paper;
        } else {
          c = on ? (n < .68 && y % 7 < 6 && r < .88 ? grey : ink) : r < .14 ? grey : ink;
          if ((y + (x % 30 < 15 ? 0 : 11)) % 22 < 5 && x % 15 < 11 && r > .55) c = blue;
          if (on && x % 4 === 0 && n > .975) c = paper;
        }
        if (y > top + 5 && y < top + 12 && r < .7) c = ink;
        const ex = (x - 1303) / 13, ey = (y - 477) / 17, d = ex * ex + ey * ey;
        if (d < 1) c = d > .5 || r < .6 ? ink : r < .85 ? blue : grey;
        if (x < 1366 && Math.abs(y - lerp(x, 1274, 1366, 499, 512)) < 1) c = ink;
        if (x < 1366 && Math.abs(y - lerp(x, 1274, 1366, 538, 552)) < 1) c = ink;
      }
    }
    img.data.set([c[0], c[1], c[2], 255], (j * W + i) * 4);
  }
}
ctx.putImageData(img, 0, 0);
ctx.fillStyle = '#95a5a0';
for (const [x, y] of [[1518,356],[1515,386],[1517,405],[1519,418],[1519,442],[1518,487]]) ctx.fillRect(x - OX, y - OY, 6, 1);
```
